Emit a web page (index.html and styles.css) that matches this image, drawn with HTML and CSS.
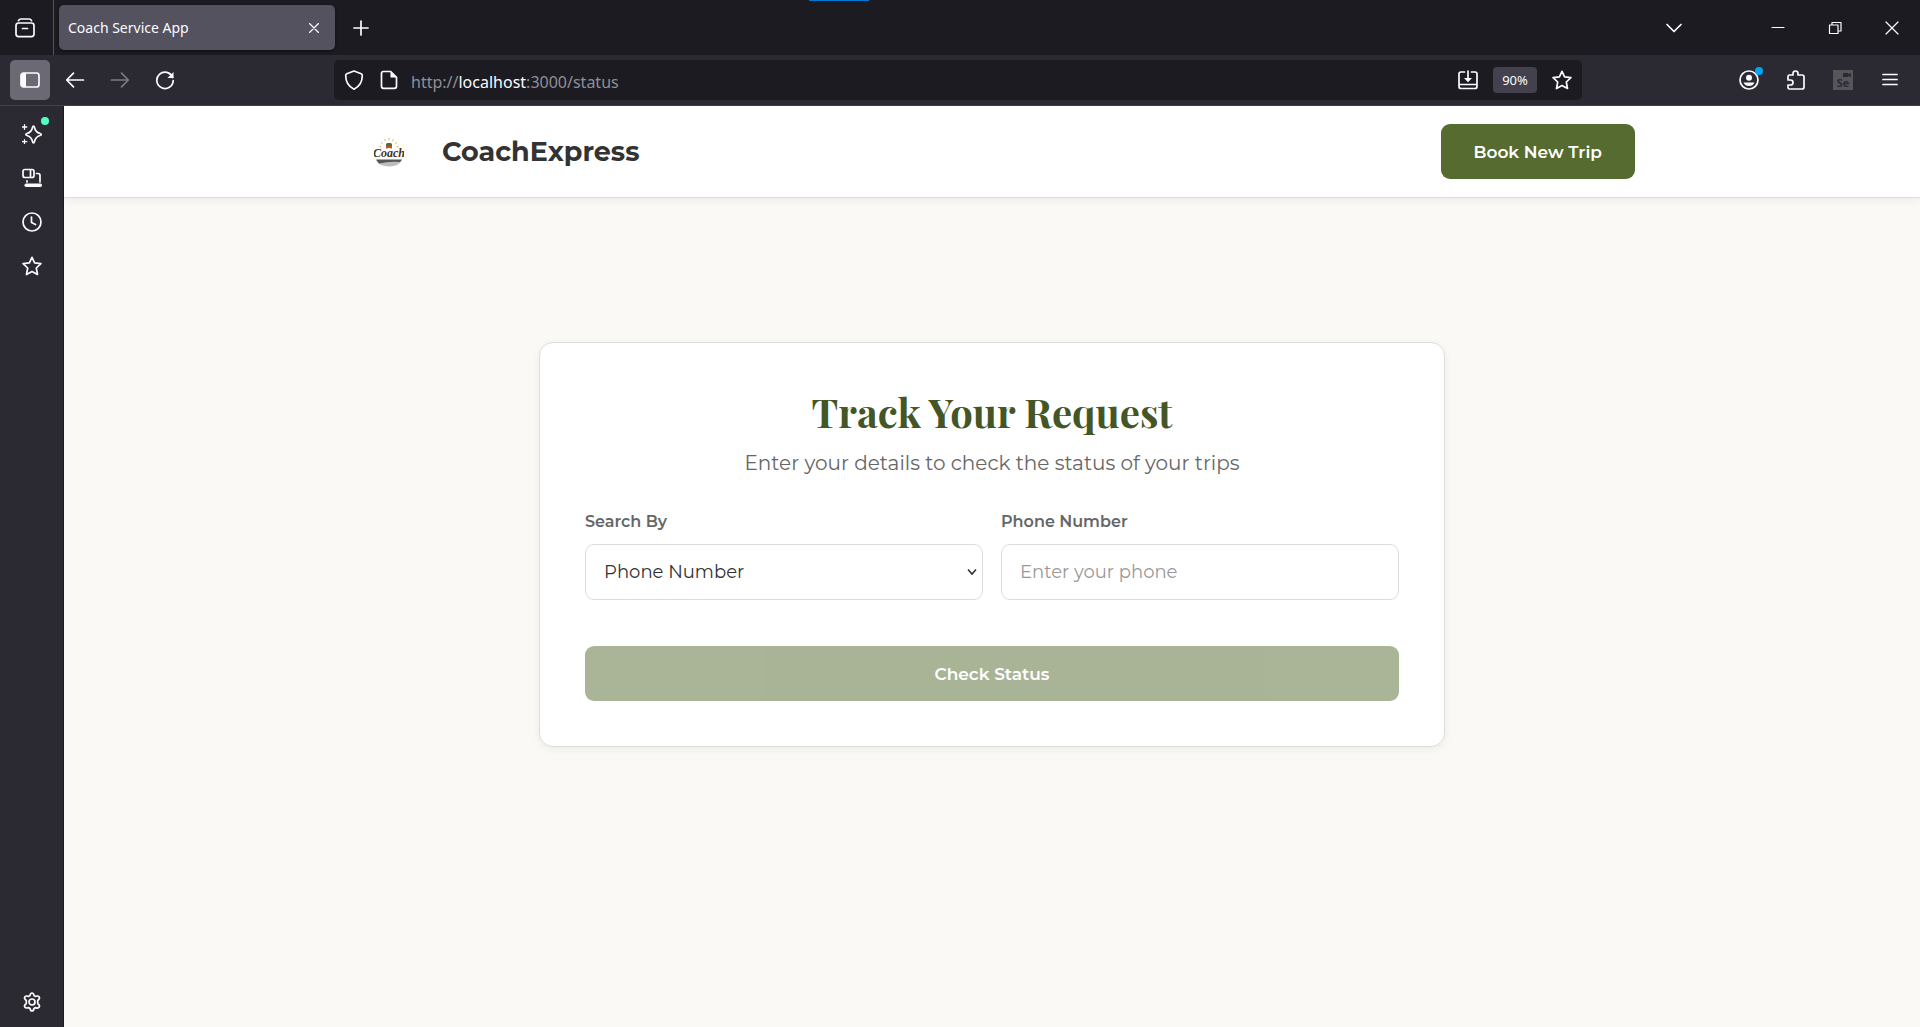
FILE: index.html
```html
<!DOCTYPE html>
<html lang="en">
<head>
<meta charset="utf-8">
<meta name="viewport" content="width=device-width, initial-scale=1">
<title>Coach Service App</title>
<link rel="stylesheet" href="styles.css">
</head>
<body>
<div class="browser">
  <div class="tabbar">
    <span class="window-accent"></span>
    <button class="tab-overview" aria-label="View tabs">
      <svg class="icon" viewBox="0 0 20 20"><rect x="1" y="5" width="18" height="13.6" rx="2.6"/><path d="M3.5 2.6Q4.2 1 6 1h8q1.800 0 2.500 1.600"/><path d="M7.500 10.500h5"/></svg>
    </button>
    <div class="tab">
      <span class="tab-title">Coach Service App</span>
      <button class="tab-close" aria-label="Close tab"><svg class="icon-small" viewBox="0 0 10 10"><path d="M.5.5l9 9M9.500.5l-9 9"/></svg></button>
    </div>
    <button class="new-tab" aria-label="New tab"><svg class="icon" viewBox="0 0 20 20"><path d="M10 3v14M3 10h14"/></svg></button>
    <div class="window-controls">
      <button class="list-tabs" aria-label="List all tabs"><svg class="icon" viewBox="0 0 20 20"><path d="M3 6.500l7 7 7-7"/></svg></button>
      <button class="window-button" aria-label="Minimize"><svg class="icon thin" viewBox="0 0 20 20"><path d="M4 9.500h12"/></svg></button>
      <button class="window-button" aria-label="Restore"><svg class="icon thin" viewBox="0 0 20 20"><path d="M4.500 7h8.500v8.500H4.500zM7 6.500v-2h9v8.500h-2.500"/></svg></button>
      <button class="window-button" aria-label="Close window"><svg class="icon thin" viewBox="0 0 20 20"><path d="M4 4l12 12M16 4L4 16"/></svg></button>
    </div>
  </div>

  <div class="toolbar">
    <div class="toolbar-nav">
      <button class="tool active" aria-label="Toggle sidebar"><svg class="icon" viewBox="0 0 20 20"><rect x="1" y="3" width="18" height="14" rx="2.500"/><path class="solid" d="M1 4.500L3 3h3v14H3l-2-1.500z"/></svg></button>
      <button class="tool" aria-label="Back"><svg class="icon" viewBox="0 0 20 20"><path d="M18.500 10H2M8.500 3.200L1.700 10l6.800 6.800"/></svg></button>
      <button class="tool" aria-label="Forward" disabled><svg class="icon" viewBox="0 0 20 20"><path d="M1.500 10H18M11.500 3.200l6.800 6.800-6.800 6.800"/></svg></button>
      <button class="tool" aria-label="Reload"><svg class="icon" viewBox="0 0 20 20"><path d="M17.700 7.500A8.200 8.200 0 1 0 18.200 10.500M17.500 7A8.200 8.200 0 0 0 14 3.400"/><path class="solid" d="M18.500 2v6h-6z"/></svg></button>
    </div>
    <div class="urlbar">
      <button class="url-icon" aria-label="Tracking protection"><svg class="icon" viewBox="0 0 20 20"><path d="M10 1L17.200 3.800Q18.300 4.300 18.300 5.500C18.300 12 15.500 16.500 10 19.200C4.500 16.500 1.700 12 1.700 5.500Q1.700 4.300 2.800 3.800z"/></svg></button>
      <button class="url-icon page-info" aria-label="Site information"><svg class="icon" viewBox="0 0 20 20"><path d="M4.500 1.500h7.200L17.500 7.300v9q0 2-2 2h-11q-2 0-2-2v-12.800q0-2 2-2z"/><path class="solid" d="M11.500 1.500v6h6z"/></svg></button>
      <div class="url" role="textbox" aria-label="Address" contenteditable="true" spellcheck="false">http://<span class="url-host">localhost</span>:3000/status</div>
      <div class="url-actions">
        <button class="url-icon" aria-label="Install page"><svg class="icon" viewBox="0 0 20 20"><path d="M6.500 2H3Q1 2 1 4v12.500q0 2 2 2h14q2 0 2-2V4q0-2-2-2h-3.500M1.500 14.500h17M10 1v9"/><path class="solid" d="M6 8h8l-4 4.300z"/></svg></button>
        <button class="zoom-level">90%</button>
        <button class="url-icon" aria-label="Bookmark"><svg class="icon" viewBox="0 0 20 20"><path d="M10 1.300l2.600 5.600 6.300.8-4.600 4.300 1.200 6.500L10 15.500l-5.500 3 1.200-6.500L1.100 7.700l6.300-.8z"/></svg></button>
      </div>
    </div>
    <div class="toolbar-actions">
      <button class="tool badge-host" aria-label="Account"><svg class="icon" viewBox="0 0 20 20"><circle cx="10" cy="10" r="9"/><circle class="solid" cx="10" cy="7.700" r="3"/><path class="solid" d="M4.500 12.500h11q-1.600 3.500-5.500 3.500t-5.500-3.500z"/></svg><span class="badge blue"></span></button>
      <button class="tool" aria-label="Extensions"><svg class="icon" viewBox="0 0 20 20"><path d="M2 8V6.500Q2 5 3.500 5H7V3.500a2.500 2.500 0 0 1 5 0V5h4q2 0 2 2v10q0 2-2 2H3.500Q2 19 2 17.500V15h2.500a2.500 2.500 0 0 0 0-5H2z"/></svg></button>
      <button class="tool" aria-label="Selenium IDE"><span class="selenium"><svg class="camera" viewBox="0 0 8 4"><path d="M0 0h5v1L8 0v4L5 3v1H0z"/></svg><span>Se</span></span></button>
      <button class="tool" aria-label="Menu"><svg class="icon" viewBox="0 0 20 20"><path d="M3 4.500h14M3 9.500h14M3 14.500h14"/></svg></button>
    </div>
  </div>

  <div class="workspace">
    <nav class="sidebar" aria-label="Sidebar">
      <button class="side-button badge-host" aria-label="AI chatbot"><svg class="icon" viewBox="0 0 20 20"><path d="M11.500 2.200Q12.200 2.200 12.500 3.500Q13.500 8.200 18 9.500Q19.200 9.900 19.200 10.500Q19.200 11.100 18 11.500Q13.500 12.800 12.500 17.500Q12.200 18.800 11.500 18.800Q10.800 18.800 10.500 17.500Q9.500 12.800 5 11.500Q3.800 11.100 3.800 10.500Q3.800 9.900 5 9.500Q9.500 8.200 10.500 3.500Q10.800 2.200 11.500 2.200z"/><path class="sparks" d="M2.500.7v4.600M.2 3h4.600M2.500 15.700v4M.2 17.700h4.600"/></svg><span class="badge green"></span></button>
      <button class="side-button" aria-label="Synced tabs"><svg class="icon" viewBox="0 0 20 20"><rect x="1" y="1.500" width="11" height="8" rx="2"/><path d="M8.500 2v7M14.500 5.500H16q2 0 2 2V14M5 12.800v1.200"/><path class="solid" d="M4 15.500h14.500q1.500 0 1.500 1.700t-1.500 1.700H4q-1.500 0-1.500-1.700T4 15.500z"/></svg></button>
      <button class="side-button" aria-label="History"><svg class="icon" viewBox="0 0 20 20"><circle cx="10" cy="10" r="9"/><path d="M9.500 5v5.500l4 2"/></svg></button>
      <button class="side-button" aria-label="Bookmarks"><svg class="icon" viewBox="0 0 20 20"><path d="M10 1.300l2.600 5.600 6.300.8-4.600 4.300 1.200 6.500L10 15.500l-5.500 3 1.200-6.500L1.100 7.700l6.300-.8z"/></svg></button>
      <button class="side-button settings" aria-label="Customize sidebar"><svg class="icon" viewBox="0 0 20 20"><path d="M8 3.500Q8.500 1 10 1t2 2.500l1.500.9q2.700-1 3.700.6t-1.500 3.500v3q2.500 1.800 1.500 3.500t-3.700.6L12 16.500Q11.500 19 10 19t-2-2.500l-1.500-.9q-2.700 1-3.700-.6t1.500-3.500v-3Q1.800 6.600 2.800 5t3.700-.6z"/><circle cx="10" cy="10" r="3"/></svg></button>
    </nav>

    <div class="page">
      <header class="site-header">
        <div class="site-header-inner">
          <a class="brand" href="#">
            <svg class="logo" viewBox="0 0 30 30" role="img" aria-label="Coach">
              <path class="logo-rays" d="M5.500 9.500l2 .6M7 5.500l1.700 1.300M10.500 2.300l1.200 1.800M15 .8v2.500M19.500 2.300l-1.200 1.800M23 5.500l-1.700 1.300M24.500 9.500l-2 .6"/>
              <rect class="logo-bus" x="12" y="6" width="6" height="5" rx="1.500"/>
              <path class="logo-bumper" d="M12 9h6v2.500h-1.500v-1h-3v1H12z"/>
              <text class="logo-word" x="15" y="20" text-anchor="middle">Coach</text>
              <path class="logo-road-light" d="M2 23h26q-3 6.500-13 6.500T2 23z"/>
              <path class="logo-road" d="M2 22.500h26l-2 2.500q-10-1-21 1.500z"/>
            </svg>
            <span class="brand-name">CoachExpress</span>
          </a>
          <button class="button book">Book New Trip</button>
        </div>
      </header>

      <main class="content">
        <form class="card">
          <h1 class="card-title">Track Your Request</h1>
          <p class="card-subtitle">Enter your details to check the status of your trips</p>
          <div class="fields">
            <div class="field">
              <label class="label" for="search-by">Search By</label>
              <div class="select-wrap">
                <select class="control" id="search-by"><option>Phone Number</option><option>Email</option></select>
                <svg class="chevron" viewBox="0 0 10 8"><path d="M1 1.500l4 4.500 4-4.500"/></svg>
              </div>
            </div>
            <div class="field">
              <label class="label" for="phone">Phone Number</label>
              <input class="control" id="phone" type="tel" placeholder="Enter your phone">
            </div>
          </div>
          <button class="button submit" type="submit" disabled>Check Status</button>
        </form>
      </main>
    </div>
  </div>
</div>
</body>
</html>
```
FILE: styles.css
```css
* { box-sizing: border-box; }

body {
  margin: 0;
  background: #2b2a33;
  font-family: Montserrat, Inter, sans-serif;
}

button {
  border: 0;
  padding: 0;
  background: none;
  color: inherit;
  font: inherit;
}

.browser {
  display: flex;
  flex-direction: column;
  min-height: 100vh;
  color: #fbfbfe;
}

.icon,
.icon-small {
  display: block;
  width: 20px;
  height: 20px;
  fill: none;
  stroke: currentColor;
  stroke-width: 1.7;
  stroke-linecap: round;
  stroke-linejoin: round;
}

.icon-small { width: 10px; height: 10px; stroke-width: 1.3; }
.icon.thin { stroke-width: 1.2; }
.icon .solid { fill: currentColor; stroke: none; }
.icon .sparks { stroke-width: 1.3; }

/* Tab strip */
.tabbar {
  position: relative;
  display: flex;
  align-items: center;
  height: 55px;
  background: #1c1b22;
  font-family: "Segoe UI", "Noto Sans", sans-serif;
  font-size: 14px;
}

.window-accent {
  position: absolute;
  top: 0;
  left: calc(50% - 151px);
  width: 60px;
  height: 1px;
  background: #0078d7;
}

.tab-overview {
  display: grid;
  place-items: center;
  width: 54px;
  height: 100%;
  padding-right: 4px;
  border-right: 1px solid #52515e;
}

.tab {
  display: flex;
  align-items: center;
  justify-content: space-between;
  width: 276px;
  height: 45px;
  margin-left: 5px;
  padding: 0 16px 0 9px;
  border-radius: 5px;
  background: #53525e;
  box-shadow: 0 1px 3px #0008;
}

.new-tab { margin-left: 16px; }

.window-controls {
  display: flex;
  align-items: center;
  margin-left: auto;
}

.list-tabs { margin-right: 65px; }

.window-button {
  display: grid;
  place-items: center;
  width: 57px;
  height: 55px;
}

/* Navigation toolbar */
.toolbar {
  display: flex;
  align-items: center;
  height: 51px;
  padding: 0 10px;
  border-bottom: 1px solid #42414d;
  background: #2b2a33;
}

.toolbar-nav { display: flex; gap: 5px; }

.tool {
  display: grid;
  place-items: center;
  width: 40px;
  height: 40px;
  border-radius: 5px;
}

.tool.active { background: #6a6974; }
.tool:disabled { color: #7c7b84; }

.urlbar {
  display: flex;
  flex: 1;
  align-items: center;
  height: 40px;
  margin: 0 147px 0 149px;
  padding: 0 10px;
  border-radius: 5px;
  background: #1c1b22;
  font-family: "Segoe UI", "Noto Sans", sans-serif;
}

.page-info { margin-left: 15px; }

.url {
  flex: 1;
  margin-left: 12px;
  padding-top: 3px;
  color: #8f8f98;
  font-size: 16px;
}

.url-host { color: #fbfbfe; }

.url-actions {
  display: flex;
  align-items: center;
  gap: 15px;
}

.zoom-level {
  width: 44px;
  height: 26px;
  border-radius: 4px;
  background: #42414d;
  font-size: 13px;
}

.toolbar-actions { display: flex; gap: 7px; }

.badge-host { position: relative; }

.badge {
  position: absolute;
  top: 7px;
  right: 6px;
  width: 8px;
  height: 8px;
  border-radius: 50%;
}

.badge.blue { background: #00a6f4; }
.badge.green { top: 3px; right: 3px; background: #54ffbd; }

.selenium {
  display: flex;
  flex-direction: column;
  align-items: center;
  width: 20px;
  height: 20px;
  padding: 3px 2px 0;
  background: #55555a;
  color: #2b2a33;
  font: bold 11px/12px "Open Sans", sans-serif;
}

.camera { align-self: flex-end; width: 8px; height: 4px; fill: currentColor; }

/* Sidebar and page */
.workspace { display: flex; flex: 1; }

.sidebar {
  display: flex;
  flex-direction: column;
  align-items: center;
  gap: 4px;
  width: 64px;
  padding: 8px 0 5px;
  border-right: 1px solid #1c1b22;
  background: #2b2a33;
}

.side-button {
  display: grid;
  place-items: center;
  width: 40px;
  height: 40px;
}

.settings { margin-top: auto; }

.page {
  display: flex;
  flex: 1;
  flex-direction: column;
  background: #faf9f5;
  color: #333;
}

.site-header {
  padding: 18px 24px;
  border-bottom: 1px solid #ddd;
  background: #fff;
  box-shadow: 0 2px 9px #0000000f;
}

.site-header-inner {
  display: flex;
  align-items: center;
  justify-content: space-between;
  max-width: 1286px;
  margin: 0 auto;
}

.brand {
  display: flex;
  align-items: center;
  gap: 38px;
  padding-left: 25px;
  color: inherit;
  text-decoration: none;
}

.logo { width: 30px; height: 30px; }
.logo-rays { fill: none; stroke: #dcb45c; stroke-width: 1; }
.logo-bus { fill: #556b2f; }
.logo-bumper { fill: #c0562a; }
.logo-word { fill: #3d3423; font: italic bold 12px "Liberation Serif", serif; }
.logo-road-light { fill: #bdbdbd; }
.logo-road { fill: #555; }

.brand-name { font-size: 27px; font-weight: 700; }

.button {
  height: 55px;
  border-radius: 9px;
  background: #556b2f;
  color: #fff;
  font-size: 17px;
  font-weight: 600;
}

.book { padding: 0 33px; }

.content { padding: 144px 24px; }

.card {
  max-width: 906px;
  margin: 0 auto;
  padding: 45px;
  border: 1px solid #ddd;
  border-radius: 14px;
  background: #fff;
  box-shadow: 0 2px 9px #0000000f;
}

.card-title {
  margin: 0;
  color: #445626;
  font: bold 40px/48px "Playfair Display", "Liberation Serif", serif;
  text-align: center;
}

.card-subtitle {
  margin: 12px 0 32px;
  color: #666;
  font-size: 20px;
  line-height: 30px;
  text-align: center;
}

.fields {
  display: grid;
  grid-template-columns: 1fr 1fr;
  gap: 18px;
}

.label {
  display: block;
  margin-bottom: 10px;
  color: #666;
  font-size: 16px;
  font-weight: 600;
  line-height: 24px;
}

.select-wrap { display: grid; align-items: center; }
.select-wrap > * { grid-area: 1 / 1; }

.control {
  display: block;
  width: 100%;
  height: 56px;
  padding: 0 18px;
  border: 1px solid #ddd;
  border-radius: 9px;
  background: #fff;
  color: #333;
  font: inherit;
  font-size: 18px;
  appearance: none;
}

.control::placeholder { color: #999; }

.chevron {
  justify-self: end;
  width: 10px;
  height: 8px;
  margin-right: 6px;
  fill: none;
  stroke: #333;
  stroke-width: 1.6;
  pointer-events: none;
}

.submit {
  width: 100%;
  margin-top: 46px;
  opacity: .5;
}
```
